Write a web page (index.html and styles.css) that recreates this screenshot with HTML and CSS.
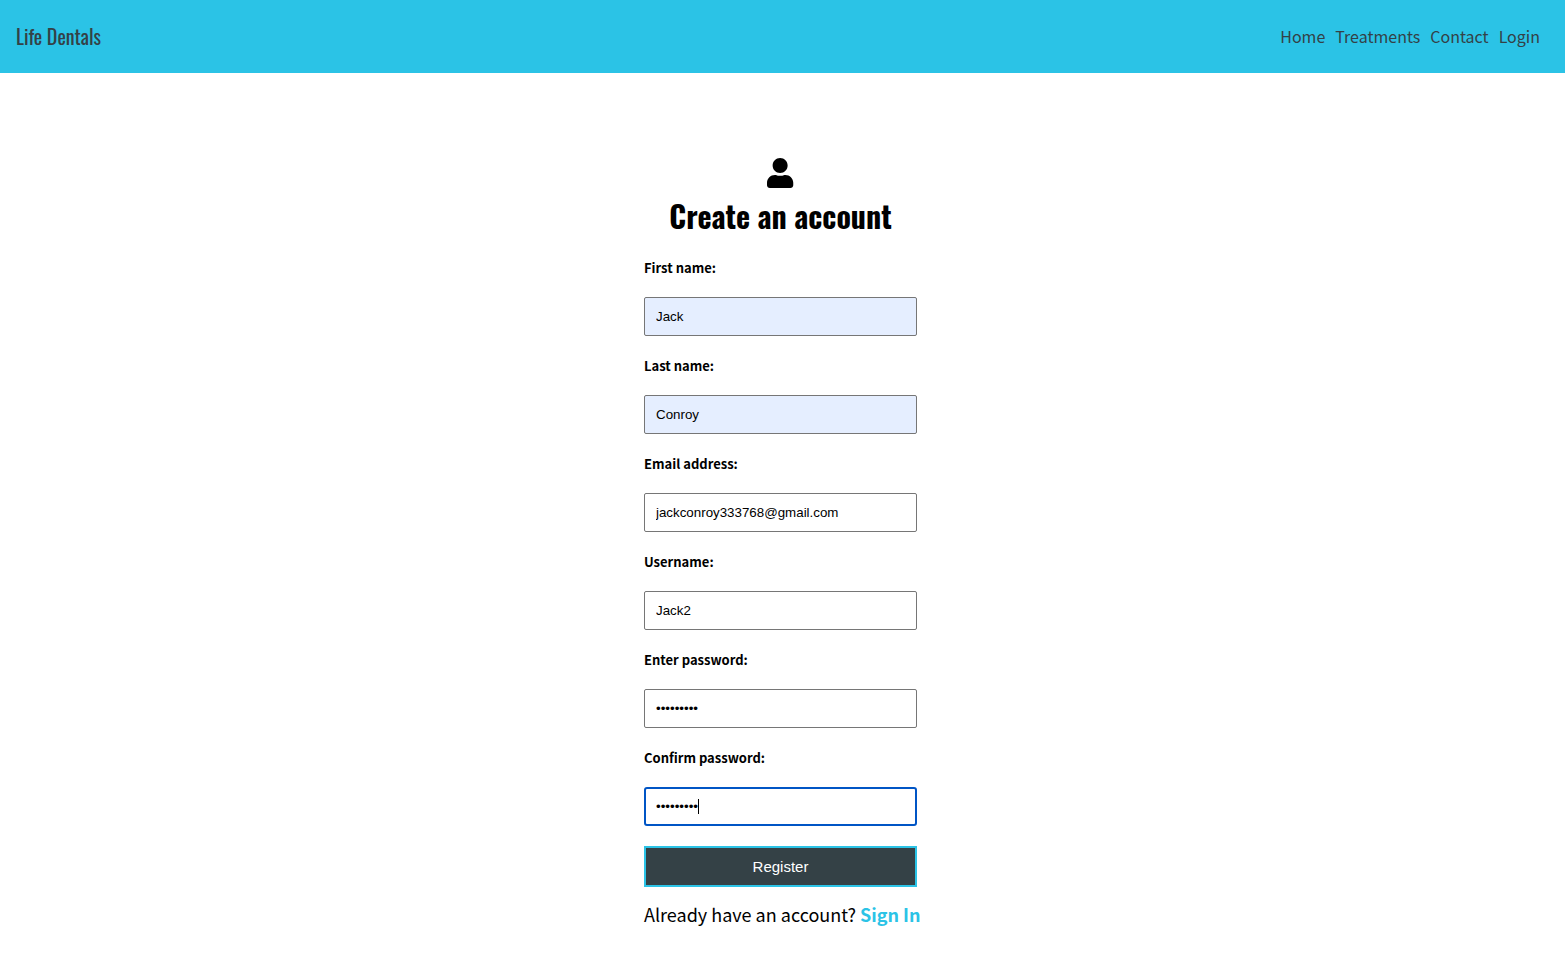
FILE: index.html
```html
<!DOCTYPE html>
<html lang="en">
<head>
<meta charset="utf-8">
<title>Life Dentals</title>
<link rel="stylesheet" href="styles.css">
</head>
<body>
<header class="navbar">
  <a class="brand" href="#">Life Dentals</a>
  <nav class="links">
    <a href="#">Home</a>
    <a href="#">Treatments</a>
    <a href="#">Contact</a>
    <a href="#">Login</a>
  </nav>
</header>
<main class="register">
  <form class="form">
    <svg class="user-icon" viewBox="0 0 448 512" aria-hidden="true"><path d="M224 256c70.7 0 128-57.3 128-128S294.7 0 224 0 96 57.3 96 128s57.3 128 128 128zm89.6 32h-16.7c-22.2 10.2-46.9 16-72.9 16s-50.6-5.8-72.9-16h-16.7C60.2 288 0 348.2 0 422.4V464c0 26.5 21.5 48 48 48h352c26.5 0 48-21.5 48-48v-41.6c0-74.2-60.2-134.4-134.4-134.4z"/></svg>
    <h1 class="title">Create an account</h1>
    <div class="field">
      <label for="first">First name:</label>
      <input class="filled" id="first" type="text" value="Jack">
    </div>
    <div class="field">
      <label for="last">Last name:</label>
      <input class="filled" id="last" type="text" value="Conroy">
    </div>
    <div class="field">
      <label for="email">Email address:</label>
      <input id="email" type="email" value="jackconroy333768@gmail.com">
    </div>
    <div class="field">
      <label for="username">Username:</label>
      <input id="username" type="text" value="Jack2">
    </div>
    <div class="field">
      <label for="password">Enter password:</label>
      <input id="password" type="password" value="password1">
    </div>
    <div class="field">
      <label for="confirm">Confirm password:</label>
      <div class="active">
        <input id="confirm" type="password" value="password1">
        <span class="caret"></span>
      </div>
    </div>
    <button class="submit" type="button">Register</button>
    <p class="signin">Already have an account? <a href="#">Sign In</a></p>
  </form>
</main>
</body>
</html>
```
FILE: styles.css
```css
* {
  box-sizing: border-box;
}

body {
  margin: 0;
  background: #fff;
  color: #000;
  font-family: "Source Sans Pro", "Noto Sans CJK SC", sans-serif;
}

a {
  text-decoration: none;
}

.navbar {
  display: flex;
  align-items: center;
  justify-content: space-between;
  padding: 21px 25px 22px 16px;
  background: #2bc3e6;
}

.navbar a {
  color: #344146;
}

.brand {
  font-family: Oswald, "Liberation Sans Narrow", "Open Sans Condensed", "Roboto Condensed", "Liberation Sans", sans-serif;
  font-size: 20px;
  line-height: 30px;
}

.links {
  display: flex;
  gap: 10px;
  font-size: 16px;
  line-height: 30px;
}

.register {
  display: flex;
  justify-content: center;
  padding: 85px 4px 38px 0;
}

.form {
  display: flex;
  flex-direction: column;
  width: 273px;
}

.user-icon {
  align-self: center;
  height: 30px;
  fill: #000;
}

.title {
  margin: 3px 0 17px;
  font-family: Oswald, "Liberation Sans Narrow", "Open Sans Condensed", "Roboto Condensed", "Liberation Sans", sans-serif;
  font-size: 30px;
  font-weight: 700;
  line-height: 50px;
  text-align: center;
  white-space: nowrap;
}

.field {
  display: flex;
  flex-direction: column;
  gap: 19px;
  margin-bottom: 20px;
}

label {
  font-size: 13px;
  font-weight: 700;
  line-height: 20px;
}

input {
  width: 100%;
  height: 39px;
  padding: 0 11px;
  border: 1px solid #767676;
  border-radius: 2px;
  background: #fff;
  color: #000;
  font-family: "Liberation Sans", Arial, sans-serif;
}

.filled {
  background: #e5eeff;
}

.active {
  position: relative;
}

.active input {
  display: block;
  padding: 0 10px;
  border: 2px solid #0055c5;
  border-radius: 3px;
}

.caret {
  position: absolute;
  top: 12px;
  left: 54px;
  width: 1px;
  height: 15px;
  background: #000;
}

.submit {
  height: 41px;
  border: 2px solid #2bc3e6;
  background: #344146;
  color: #fff;
  font-family: "Liberation Sans", Arial, sans-serif;
  font-size: 15px;
}

.signin {
  margin: 13px 0 0;
  font-size: 18px;
  line-height: 28px;
  white-space: nowrap;
}

.signin a {
  color: #2bc3e6;
  font-weight: 700;
}
```
